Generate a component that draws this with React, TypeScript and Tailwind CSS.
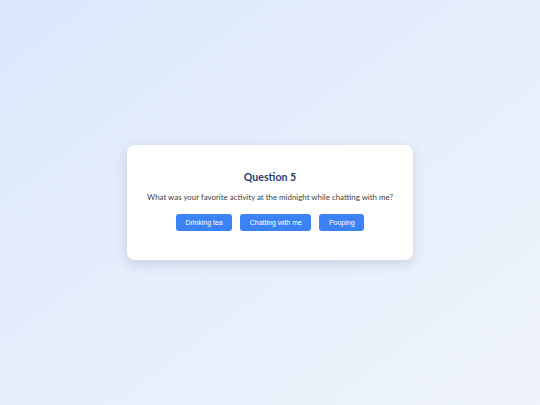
import React from "react";

const options = ["Drinking tea", "Chatting with me", "Pooping"];

export default function App() {
  return (
    <div className="w-full h-[405px] flex items-center justify-center bg-gradient-to-br from-[#dae7fc] via-[#e6eefb] to-[#eff4fb]">
      <div className="w-[286px] bg-white rounded-[8px] shadow-[0_4px_12px_rgba(60,80,120,0.18)] pt-[24px] pb-[29px] flex flex-col items-center">
        <h2
          className="text-[10.6px] leading-[16px] font-bold text-[#2a3b7c]"
          style={{ fontFamily: "Lato, 'Noto Sans', sans-serif" }}
        >
          Question 5
        </h2>
        <p
          className="mt-[6px] text-[7.9px] leading-[13px] text-[#3a3f4a]"
          style={{ fontFamily: "Lato, 'Noto Sans', sans-serif" }}
        >
          What was your favorite activity at the midnight while chatting with me?
        </p>
        <div className="mt-[10px] flex gap-[8px]">
          {options.map((o) => (
            <button
              key={o}
              className="h-[17px] px-[9.5px] bg-[#3b82f6] text-white text-[7px] rounded-[3px] leading-none"
              style={{ fontFamily: "'Liberation Sans', Arial, sans-serif" }}
            >
              {o}
            </button>
          ))}
        </div>
      </div>
    </div>
  );
}
